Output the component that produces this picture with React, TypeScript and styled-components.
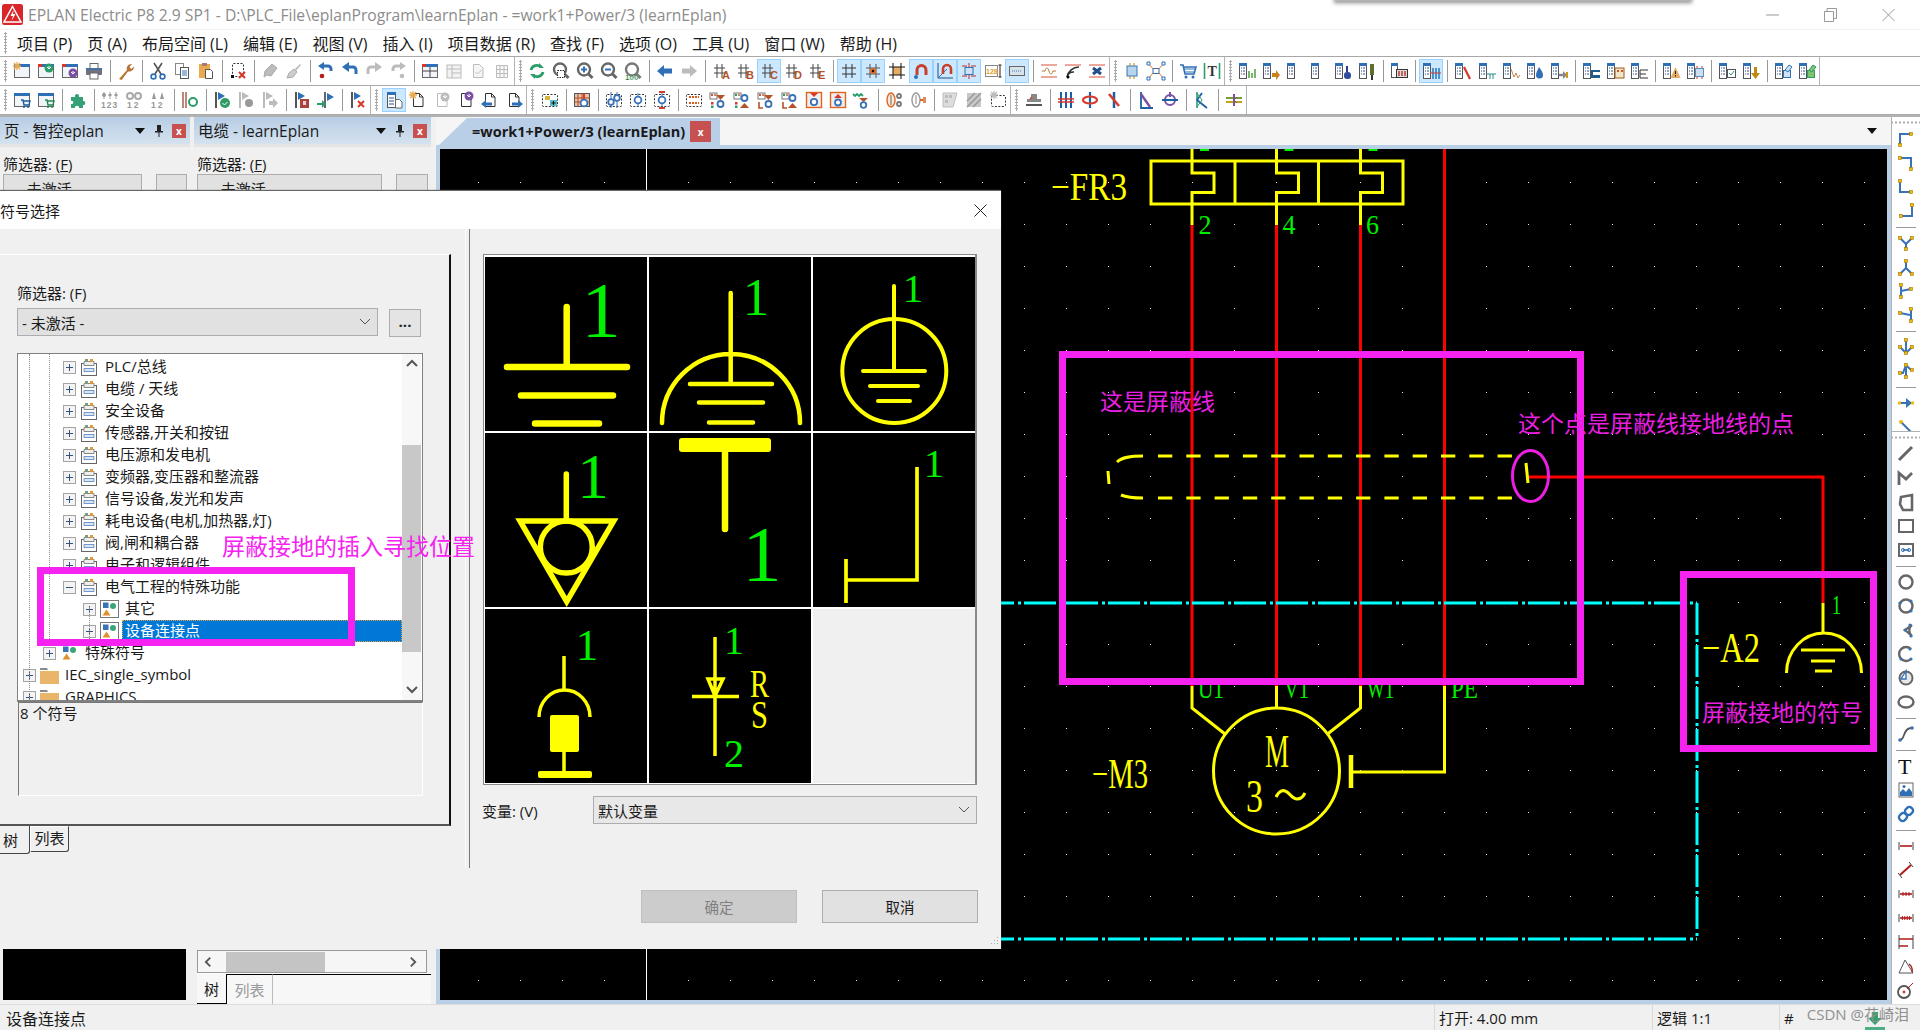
import React from 'react'
import styled, { createGlobalStyle } from 'styled-components'

const BLUE = '#2f6fb5'
const RED = '#d8392b'
const GREEN = '#2a9d6a'
const ORANGE = '#e9a94f'
const GRAY = '#666'
const LIGHT = '#bcbcbc'
const RUST = '#b5522a'
const PURPLE = '#7b4fa3'
const MAGENTA = '#f622f0'
const YELLOW = '#ffff00'
const LIME = '#00f000'
const UI_FONT = '"Open Sans", "Noto Sans CJK SC", sans-serif'

const burst = (x: number, y: number, c = ORANGE) => (
  <path d={`M${x - 4} ${y}h8M${x} ${y - 4}v8M${x - 3} ${y - 3}l6 6M${x + 3} ${y - 3}l-6 6`} stroke={c} strokeWidth="1.3" />
)
const win = (corner?: string, head = BLUE) => (
  <>
    <rect x="2.5" y="4.5" width="15" height="12" fill="#f1f5fa" stroke={GRAY} />
    <rect x="2" y="3" width="16" height="3" fill={head} />
    {corner && <rect x="2" y="3" width="4" height="3" fill={corner} />}
  </>
)
const badge = (c: string, x = 13, y = 7) => (
  <>
    <circle cx={x} cy={y} r="4.5" fill={c} />
    <path d={`M${x - 2} ${y - 1}l2 2l2 -2M${x} ${y + 1}v-3`} stroke="#fff" fill="none" />
  </>
)
const page = (c = GRAY) => <path d="M5.5 3.5h6l3.5 3.5v9.5h-9.5zM11.5 3.5v3.5h3.5" fill="#fff" stroke={c} />
const hash = (c = '#444') => <path d="M6 3v14M11 3v14M3 7h11M3 12h11" stroke={c} fill="none" />
const letter = (t: string) => (
  <text x="11" y="18" fontSize="11" fontWeight="700" fill={RUST} fontFamily="Liberation Sans">{t}</text>
)
const lens = (inner: React.ReactNode, c = '#666') => (
  <>
    <circle cx="9" cy="8.5" r="6" fill="none" stroke={c} strokeWidth="2.4" />
    <path d="M13.5 13l4 4" stroke={c} strokeWidth="3" />
    {inner}
  </>
)
const listDoc = (over: React.ReactNode) => (
  <>
    <rect x="2.5" y="3.5" width="7" height="14" fill="#fff" stroke="#555" />
    <rect x="2" y="2" width="8" height="3" fill={BLUE} />
    <path d="M4 7h1M4 10h1M4 13h1M6 7h2M6 10h2M6 13h2" stroke="#2c4f8f" />
    {over}
  </>
)
const flag = (over?: React.ReactNode, c = BLUE, bar = '#555') => (
  <>
    <path d="M4 2v16" stroke={bar} strokeWidth="2" />
    <path d="M6 2l7 4l-7 4z" fill={c} />
    {over}
  </>
)
const xMark = (x: number, y: number) => <path d={`M${x - 3} ${y - 3}l6 6M${x + 3} ${y - 3}l-6 6`} stroke={RED} strokeWidth="2" />
const ring = (x: number, y: number, r = 2.8, c = '#3a72b8') => <circle cx={x} cy={y} r={r} fill="#fff" stroke={c} strokeWidth="1.8" />
const dashed = (x = 2.5, y = 4.5, w = 15, h = 12) => (
  <rect x={x} y={y} width={w} height={h} rx="1" fill="none" stroke="#333" strokeDasharray="2 1.5" />
)
const redTri = (y = 5, c = RUST) => <path d={`M8 ${y}h9l-4.5 5z`} fill={c} />
const thumb = (c: string) => (
  <>
    <rect x="2" y="3" width="7" height="6" fill="#fff" stroke="#777" />
    <rect x="3" y="4" width="2" height="2" fill={c} />
    <rect x="6" y="4" width="2" height="2" fill="#c85" />
  </>
)
const hook = (d: string, pts: number[][]) => (
  <>
    <path d={d} fill="none" stroke="#3a72b8" strokeWidth="2" />
    {pts.map(([x, y], i) => <rect key={i} x={x - 1.5} y={y - 1.5} width="3" height="3" fill="#f0b90b" stroke="#a57800" strokeWidth=".6" />)}
  </>
)
const measure = (ticks: number) => (
  <>
    <path d="M3 6v8M17 6v8" stroke="#444" />
    <path d="M4 10h12" stroke="#b01b1b" strokeWidth="1.6" />
    {Array.from({ length: ticks }).map((_, i) => <path key={i} d={`M${4 + (i + 1) * 12 / (ticks + 1)} 8v4`} stroke="#b01b1b" />)}
  </>
)

const icons: Record<string, React.ReactNode> = {
  newPage: <>{win()}{burst(5, 5)}</>,
  openPage: <>{win(RED)}{badge(GREEN)}</>,
  closePage: <>{win(RED)}{badge(PURPLE, 13, 12)}</>,
  print: <><rect x="6" y="2.5" width="8" height="5" fill="#fff" stroke={GRAY} /><rect x="2" y="7" width="16" height="7" rx="1" fill="#6d7480" /><rect x="2" y="7" width="16" height="2" fill="#4b6f9e" /><rect x="6" y="12" width="8" height="6" fill="#fff" stroke={GRAY} /></>,
  wrench: <path d="M3 18l8-9c-1-3 1-6 5-6l-2.5 3l1.5 2l3-2.5c0 3.5-3 5.5-6 5l-6.5 8.5z" fill="#b87333" />,
  cut: <><path d="M6 2l7 11M14 2l-7 11" stroke="#555" strokeWidth="1.6" /><circle cx="5.5" cy="15.5" r="2.4" fill="none" stroke={BLUE} strokeWidth="1.6" /><circle cx="14.5" cy="15.5" r="2.4" fill="none" stroke={BLUE} strokeWidth="1.6" /></>,
  copy: <><rect x="3.5" y="2.5" width="8" height="11" fill="#fff" stroke="#888" /><rect x="8.5" y="6.5" width="8" height="11" fill="#fff" stroke="#555" /><path d="M10 10h5M10 12h5M10 14h5" stroke={BLUE} /></>,
  paste: <><rect x="3" y="3" width="11" height="14" fill={ORANGE} /><rect x="6" y="2" width="5" height="3" fill="#a77" /><path d="M9.5 8.5h5l2 2v7h-7z" fill="#fff" stroke="#555" /></>,
  selectx: <>{dashed(4.5, 2.5, 11, 13)}<rect x="3" y="14" width="3" height="3" fill="#111" />{xMark(14, 14)}</>,
  brushA: <path d="M5 10l7-7l5 4l-6 8l-4-1l-3 2z" fill={LIGHT} stroke="#aaa" />,
  brushB: <><path d="M11 8l5-5l1 1l-5 6z" fill={LIGHT} /><path d="M5 12l5-4l3 3l-4 5l-6 1z" fill="#ccc" stroke="#aaa" /></>,
  undoDot: <><path d="M15 10v-2a3 3 0 0 0-3-3h-5" fill="none" stroke={BLUE} strokeWidth="3" /><path d="M8 1l-6 4l6 4z" fill={BLUE} /><circle cx="6" cy="15" r="2.3" fill="#b71c1c" /></>,
  undo: <><path d="M16 13v-4a3 3 0 0 0-3-3h-5" fill="none" stroke={BLUE} strokeWidth="3" /><path d="M9 1l-7 5l7 5z" fill={BLUE} /></>,
  redo: <><path d="M4 13v-4a3 3 0 0 1 3-3h5" fill="none" stroke={LIGHT} strokeWidth="3" /><path d="M11 1l7 5l-7 5z" fill={LIGHT} /></>,
  redoDot: <><path d="M5 10v-2a3 3 0 0 1 3-3h5" fill="none" stroke={LIGHT} strokeWidth="3" /><path d="M12 1l6 4l-6 4z" fill={LIGHT} /><circle cx="14" cy="15" r="2.3" fill={LIGHT} /></>,
  layout: <>{win(RED)}<path d="M3 10h14M10 6v10" stroke="#444" /></>,
  layoutGray: <><rect x="3" y="4" width="14" height="13" fill="#f2f2f2" stroke={LIGHT} /><path d="M3 8h14M8 4v13M8 12h9" stroke={LIGHT} /></>,
  checkGray: <><path d="M5.5 3.5h6l3.5 3.5v9.5h-9.5z" fill="#f5f5f5" stroke={LIGHT} /><path d="M7.5 11l2 2l4-4" stroke={LIGHT} fill="none" /></>,
  tableGray: <path d="M4.5 4.5h11v12h-11zM4.5 8.5h11M4.5 12.5h11M8 4.5v12M12 4.5v12" stroke={LIGHT} fill="#f8f8f8" />,
  refresh: <><path d="M4 9a6 6 0 0 1 10-3" fill="none" stroke={GREEN} strokeWidth="2.8" /><path d="M16 11a6 6 0 0 1-10 3" fill="none" stroke={GREEN} strokeWidth="2.8" /><path d="M12 2l5 5h-5zM8 18l-5-5h5z" fill={GREEN} /></>,
  zoomWin: lens(<rect x="6.5" y="9.5" width="7" height="7" fill="#fff" stroke="#222" strokeDasharray="1.5 1" />),
  zoomIn: lens(<path d="M6 8.5h6M9 5.5v6" stroke={BLUE} strokeWidth="2" />),
  zoomOut: lens(<path d="M6 8.5h6" stroke={BLUE} strokeWidth="2" />),
  zoom100: lens(<text x="2" y="19" fontSize="8" fontWeight="700" fill="#1f7a43" stroke="#fff" strokeWidth=".2" fontFamily="Liberation Sans">100</text>, '#777'),
  back: <path d="M2 10l7-6v3.5h8v5h-8v3.5z" fill={BLUE} />,
  forward: <path d="M18 10l-7-6v3.5h-8v5h8v3.5z" fill={LIGHT} />,
  hashA: <>{hash()}{letter('A')}</>,
  hashB: <>{hash()}{letter('B')}</>,
  hashC: <>{hash()}{letter('C')}</>,
  hashD: <>{hash()}{letter('D')}</>,
  hashE: <>{hash()}{letter('E')}</>,
  grid: <path d="M7 3v14M13 3v14M3 7h14M3 13h14" stroke="#333" />,
  gridDot: <><path d="M7 3v14M13 3v14M3 7h14M3 13h14" stroke="#555" /><circle cx="10" cy="10" r="3" fill="#e26a1b" /><circle cx="10" cy="10" r="1.2" fill="#111" /></>,
  snap: <><rect x="6" y="6" width="8" height="8" fill="#e5ac62" /><path d="M6 2v16M14 2v16M2 6h16M2 14h16" stroke="#111" /></>,
  magnet: <><path d="M6 14v-5a4.5 4.5 0 0 1 9 0v5" fill="none" stroke="#c6402a" strokeWidth="3" /><circle cx="5" cy="16" r="2" fill={BLUE} /></>,
  magnetAxis: <><path d="M3 2v15h15" stroke="#1d4f8a" fill="none" /><path d="M3 17l9-9" stroke={BLUE} /><path d="M8 13v-5a4 4 0 0 1 8 0v5" fill="none" stroke="#c6402a" strokeWidth="2.6" /></>,
  snapPart: <><rect x="6" y="6.5" width="8" height="7" fill="#cfe3f7" stroke={BLUE} /><path d="M10 2v4M10 14v4M3 5h5M12 5h5M3 15h5M12 15h5" stroke="#c02a2a" /></>,
  num128: <><rect x="2.5" y="4.5" width="12" height="11" fill="#fff" stroke="#888" /><text x="3" y="13" fontSize="7" fontWeight="700" fill="#e3a21a" fontFamily="Liberation Sans">128</text><path d="M17 4v12M15.5 4h3M15.5 16h3" stroke="#222" /></>,
  rectDots: <><rect x="2.5" y="5.5" width="15" height="9" fill="#d8e2ea" stroke="#666" /><path d="M5 10h10" stroke="#3a72b8" strokeDasharray="1 1" /></>,
  lineWave: <><path d="M2 4h16M2 16h16" stroke="#d8503a" /><path d="M3 10h3c1-4 3-4 4 0s3 4 4 0h3" fill="none" stroke="#b87333" /></>,
  lineSignal: <><path d="M2 4h16" stroke="#d8503a" /><path d="M4 16a12 12 0 0 1 12-10M4 16a7 7 0 0 1 7-5" fill="none" stroke="#333" strokeWidth="1.6" /><circle cx="5" cy="16" r="1.5" /></>,
  lineCross: <><path d="M2 4h16M2 16h16" stroke="#d8503a" /><path d="M6 7l8 6M14 7l-8 6" stroke="#224f88" strokeWidth="3" /></>,
  chip: <><rect x="5" y="5" width="10" height="10" fill="#b9d5ee" stroke="#3a72b8" /><path d="M8 2v3M12 2v3M8 15v3M12 15v3" stroke="#b8860b" /></>,
  chipLinks: <><rect x="7" y="7.5" width="6" height="5" fill="#fff" stroke={BLUE} /><path d="M3 3l4 5M17 3l-4 5M3 17l4-5M17 17l-4-5" stroke="#e27b2e" /><path d="M1 1h3v3h-3zM16 1h3v3h-3zM1 16h3v3h-3zM16 16h3v3h-3z" fill="#fff" stroke={BLUE} /></>,
  cart: <><path d="M2 4h3l2 9h9l2-7H6" fill="none" stroke={BLUE} strokeWidth="1.6" /><path d="M6 8h11M7 11h10" stroke={BLUE} /><circle cx="8" cy="16" r="1.5" fill={BLUE} /><circle cx="15" cy="16" r="1.5" fill={BLUE} /></>,
  textT: <><path d="M2.5 2v16" stroke={GREEN} strokeWidth="1.6" /><path d="M17.5 2v16" stroke={GREEN} strokeWidth="1.6" /><text x="5.5" y="15" fontSize="14" fontWeight="700" fill="#333" fontFamily="Liberation Serif">T</text></>,
  listGreen: listDoc(<><rect x="11" y="10" width="2" height="7" fill="#79b86c" /><rect x="14" y="12" width="2" height="5" fill="#79b86c" /><rect x="17" y="8" width="2" height="9" fill="#79b86c" /></>),
  listOut: listDoc(<path d="M11 12h4v-3l4 5l-4 5v-3h-4z" fill="#c9831e" />),
  listPlain: listDoc(null),
  listBlob: listDoc(<><path d="M14 5v6" stroke="#223e8c" strokeWidth="2" /><rect x="11" y="11" width="7" height="7" rx="3" fill="#2f4c9c" /></>),
  listSword: listDoc(<><rect x="13" y="3" width="4" height="11" fill="#5f6f2f" /><path d="M15 14v5" stroke="#333" strokeWidth="2" /></>),
  listDark: <><rect x="2.5" y="3.5" width="6" height="13" fill="#fff" stroke="#555" /><rect x="2" y="2" width="7" height="3" fill={BLUE} /><rect x="7.5" y="8.5" width="11" height="8" fill="#ddd" stroke="#333" /><path d="M10 10v5M13 10v5M16 10v5" stroke="#b5322a" strokeWidth="1.4" /></>,
  listRail: listDoc(<><path d="M12 7v11M15 7v11M18 7v11" stroke="#1c78c0" strokeWidth="1.5" /><path d="M9 12h11" stroke={RED} /></>),
  listCut: listDoc(<path d="M11 6l6 12" stroke={RED} strokeWidth="2.2" />),
  listWires: listDoc(<path d="M10 13h9M13 13v5M16 13v5" stroke="#2a8a8a" fill="none" />),
  listWave: listDoc(<path d="M10 8l3 8l2-4l2 5l2-3" stroke="#c6865a" fill="none" />),
  listDrop: listDoc(<path d="M14 6c3 4 4 6 4 8a3.5 3.5 0 0 1-7 0c0-2 1-4 3-8z" fill={BLUE} />),
  listArrow: listDoc(<><path d="M10 14h7" stroke="#888" strokeWidth="2.5" /><path d="M14 10l4 4l-4 4z" fill="#888" /><rect x="17" y="11" width="2" height="6" fill="#cc9a1b" /></>),
  listBlueT: listDoc(<path d="M10 9h9v2h-7v3h7v3h-9z" fill="#205d8c" />),
  listPlan: listDoc(<><rect x="10" y="7" width="9" height="10" fill="#f0e7c6" stroke="#a05a1b" /><path d="M12 9h2v2h-2zM16 9h2v2h-2z" fill="#d8502a" /></>),
  listBlackT: listDoc(<path d="M11 9h8M11 9v8M11 13h6M11 17h8" stroke="#333" fill="none" />),
  listWarn: listDoc(<><path d="M14.5 6l5 11h-10z" fill="#e5ac62" /><path d="M14.5 10v3M14.5 14v1.5" stroke="#222" /></>),
  listChip: listDoc(<><rect x="10.5" y="7.5" width="8" height="8" fill="#cde0f2" stroke="#5b8dc0" /><path d="M12 5v2M17 5v2M12 16v2M17 16v2" stroke={RED} /></>),
  listCheck: listDoc(<><rect x="10.5" y="8.5" width="8" height="8" fill="#fff" stroke="#555" /><path d="M12 12l2 2l3-4" stroke={GREEN} fill="none" /></>),
  listDown: listDoc(<path d="M13 6h3v6h3l-4.5 6l-4.5-6h3z" fill="#c08a12" />),
  listEdit: listDoc(<><rect x="10.5" y="9.5" width="7" height="7" fill="#cfe3f7" stroke={BLUE} /><path d="M12 9l4-5l3 2l-4 5z" fill="#cfe3f7" stroke={BLUE} /></>),
  listEditG: listDoc(<><rect x="10.5" y="9.5" width="7" height="7" fill="#7ec46a" stroke={GREEN} /><path d="M12 9l4-5l3 2l-4 5z" fill="#7ec46a" stroke={GREEN} /></>),
  cartBlue: <>{win()}<path d="M9 10h2l1 5h5l1-4h-7" fill="none" stroke="#1c5a9c" strokeWidth="1.4" /><circle cx="12" cy="17" r="1" fill="#1c5a9c" /><circle cx="16" cy="17" r="1" fill="#1c5a9c" /></>,
  cartGreen: <>{win()}<path d="M9 10h2l1 5h5l1-4h-7" fill="none" stroke="#1f8a4c" strokeWidth="1.4" /><circle cx="12" cy="17" r="1" fill="#1f8a4c" /><circle cx="16" cy="17" r="1" fill="#1f8a4c" /></>,
  puzzle: <path d="M3 7h4c-1-4 5-4 4 0h4v4c3-1 3 5 0 4v3h-4c1-3-5-3-4 0h-4v-4c3 1 3-4 0-3z" fill="#36a177" />,
  term123: <><path d="M4 2v7M10 2v7M16 2v7" stroke="#999" /><circle cx="4" cy="5" r="2" fill="#999" /><rect x="8.5" y="4" width="3" height="2" fill="#999" /><rect x="14.5" y="4" width="3" height="2" fill="#999" /><text x="1" y="18" fontSize="8.5" fontWeight="700" fill="#999" fontFamily="Liberation Sans" letterSpacing="1">123</text></>,
  term12a: <><circle cx="6" cy="6" r="3" fill="none" stroke="#aaa" strokeWidth="2" /><circle cx="14" cy="6" r="3" fill="none" stroke="#aaa" strokeWidth="2" /><text x="3" y="18" fontSize="8.5" fontWeight="700" fill="#999" fontFamily="Liberation Sans" letterSpacing="2">12</text></>,
  term12b: <><path d="M6 2l2 7h-4zM14 2l2 7h-4z" fill="#999" /><text x="3" y="18" fontSize="8.5" fontWeight="700" fill="#999" fontFamily="Liberation Sans" letterSpacing="2">12</text></>,
  barsRefresh: <><path d="M3 2v16M6 2v16" stroke="#b0685a" strokeWidth="1.6" /><circle cx="13" cy="12" r="4" fill="none" stroke={GREEN} strokeWidth="2" /></>,
  flagCheck: flag(<><circle cx="13" cy="13" r="5" fill="#2f9a66" /><path d="M10.5 13l2 2l3-3" stroke="#fff" fill="none" /></>),
  flagGear: flag(<circle cx="13" cy="13" r="4" fill="#999" />, LIGHT, LIGHT),
  flagArrow: flag(<path d="M9 11h4v-3l5 5l-5 5v-3h-4z" fill={LIGHT} />, LIGHT, LIGHT),
  flagBook: flag(<><rect x="8" y="9" width="9" height="9" fill="#a8453a" /><rect x="11" y="11" width="3" height="4" fill="#ecd" /></>),
  flagIn: <><path d="M9 2v16" stroke={GRAY} strokeWidth="2" /><path d="M11 3l7 4l-7 4z" fill={BLUE} /><path d="M1 13h5v-3l4 4l-4 4v-3h-5z" fill={GREEN} /></>,
  flagX: flag(xMark(13, 14)),
  docActive: <><rect x="3.5" y="2.5" width="8" height="15" fill="#fff" stroke="#555" /><rect x="3" y="2" width="9" height="3" fill={BLUE} /><path d="M5 8h5M5 11h5M5 14h5" stroke="#2c4f8f" /><path d="M11.5 9.5h4l2.5 2.5v6h-6.5z" fill="#fff" stroke={GRAY} /></>,
  pageNew: <>{page('#333')}{burst(5, 5)}</>,
  pageOpen: <>{page(LIGHT)}{badge(LIGHT)}</>,
  pageClose: <>{page('#333')}{badge(PURPLE, 13, 6)}</>,
  pageIn: <>{page('#333')}<path d="M1 14l5-4v2.5h6v3h-6v2.5z" fill={BLUE} /></>,
  pageOut: <>{page('#333')}<path d="M19 14l-5-4v2.5h-6v3h6v2.5z" fill={BLUE} /></>,
  dashAdd: <>{dashed()}<path d="M5 7h5M5 9h5" stroke="#c79b00" strokeWidth="1.4" /><rect x="10" y="10" width="7" height="6" fill="#55bcc9" /><path d="M13.5 11v4M11.5 13h4" stroke="#111" /></>,
  gridNode: <><rect x="2.5" y="3.5" width="15" height="13" fill="#e7c3a5" stroke="#555" /><path d="M6 4v12M10 4v12M2 8h15M2 12h15" stroke="#b5482b" />{ring(12, 13, 3.4)}<path d="M12 3v6" stroke={RED} strokeWidth="2" /></>,
  dashRings: <>{dashed()}<path d="M7 2v16M13 2v16" stroke="#3a72b8" />{ring(7, 12)}{ring(13, 8)}</>,
  dashRing: <>{dashed()}<path d="M10 3v14" stroke="#3a72b8" />{ring(10, 10, 3.4)}</>,
  dashRingRed: <>{dashed()}<path d="M10 2v16" stroke="#3a72b8" /><path d="M7 2h6M7 18h6" stroke={RED} strokeWidth="2" />{ring(10, 10, 3.4)}</>,
  dashBanks: <>{dashed()}<path d="M5 7h10M5 13h10" stroke="#d85a1b" strokeDasharray="2 1" strokeWidth="2" /></>,
  termA: <>{thumb('#c55')}{redTri()}{ring(12.5, 14, 3)}<rect x="3" y="12" width="2.5" height="2.5" fill={RED} /><rect x="3" y="15.5" width="2.5" height="2.5" fill={GREEN} /></>,
  termB: <>{thumb(GREEN)}{ring(12.5, 8, 3)}<path d="M8 18h9l-4.5-5z" fill={RUST} /><rect x="3" y="12" width="2.5" height="2.5" fill={RED} /><rect x="3" y="15.5" width="2.5" height="2.5" fill={GREEN} /></>,
  termC: <>{thumb('#c55')}{redTri()}{ring(12.5, 14, 3)}<path d="M3 12v6h4" stroke={RUST} fill="none" strokeWidth="1.6" /></>,
  termD: <>{thumb(GREEN)}{ring(12.5, 8, 3)}<path d="M8 18h9l-4.5-5z" fill={RUST} /><path d="M3 12v6h4" stroke={RUST} fill="none" strokeWidth="1.6" /></>,
  boxDown: <><rect x="2.5" y="2.5" width="15" height="15" fill="#eee" stroke="#e0641b" strokeWidth="1.4" /><path d="M6 3h8l-4 4z" fill={RED} />{ring(10, 12, 3.2)}</>,
  boxUp: <><rect x="2.5" y="2.5" width="15" height="15" fill="#eee" stroke="#e0641b" strokeWidth="1.4" /><path d="M6 8h8l-4-4z" fill={RED} />{ring(10, 12.5, 3)}</>,
  greenTerm: <><path d="M1 4l2 2l2-2l2 2l2-2l2 2" stroke={GREEN} fill="none" strokeWidth="1.8" /><path d="M7 8h9l-4.5 4z" fill={RUST} />{ring(11.5, 15, 2.8)}</>,
  lampLink: <><ellipse cx="7" cy="10" rx="4" ry="7" fill="#fbe9dc" stroke="#e0641b" strokeWidth="1.4" /><path d="M7 5v10" stroke="#666" />{ring(15, 6, 2, '#777')}{ring(15, 14, 2, '#777')}</>,
  lampRed: <><ellipse cx="8" cy="10" rx="4" ry="7" fill="#fff" stroke="#999" strokeWidth="1.4" /><path d="M8 5v9" stroke="#888" /><path d="M12 10h3" stroke="#e0641b" strokeWidth="2" /><rect x="15" y="7" width="3" height="6" fill="#e08a60" /></>,
  pageCorner: <><path d="M3 3h14l-4 14h-10z" fill="#ddd" stroke={LIGHT} /><path d="M5 5h3v3h-3zM9 5h3v3h-3zM5 10h3v3h-3z" fill={LIGHT} /></>,
  hatched: <><rect x="3" y="3" width="14" height="14" fill="#c8c8c8" /><path d="M3 11l8-8M3 17l14-14M9 17l8-8" stroke="#999" strokeWidth="1.5" /></>,
  dashBurst: <>{dashed(3.5, 5.5, 14, 11)}{burst(6, 5, LIGHT)}</>,
  stamp: <><rect x="7" y="4" width="6" height="5" fill="#888" /><rect x="3" y="9" width="14" height="3" fill="#888" /><path d="M2 15h16" stroke="#555" strokeWidth="2" /><path d="M6 9l2-2" stroke={RED} strokeWidth="1.4" /></>,
  triBars: <><path d="M5 2v16M10 2v16M15 2v16" stroke="#1c5fa5" strokeWidth="2" /><path d="M2 9h16M2 12h16" stroke={RED} strokeWidth="1.5" /></>,
  lineRing: <><path d="M10 2v16" stroke="#1c5fa5" strokeWidth="2.2" /><ellipse cx="10" cy="10" rx="7" ry="3.5" fill="none" stroke={RED} strokeWidth="2.2" /></>,
  lineCut: <><path d="M10 2v16" stroke="#1c5fa5" strokeWidth="2.5" /><path d="M5 4l10 12" stroke={RED} strokeWidth="2.5" /></>,
  kBlue: <><path d="M5 2v16h12" stroke="#1c5fa5" fill="none" strokeWidth="1.8" /><path d="M5 4l9 13" stroke={PURPLE} strokeWidth="2.4" /></>,
  ringBar: <><circle cx="10" cy="10" r="5" fill="none" stroke={PURPLE} strokeWidth="2" /><path d="M2 10h16" stroke="#1c5fa5" strokeWidth="2" /><path d="M10 2v5" stroke={PURPLE} strokeWidth="2" /></>,
  kGreen: <><path d="M5 2v16" stroke={GREEN} strokeWidth="1.6" /><path d="M5 10l5-7M5 10l10 8" stroke="#1c5fa5" strokeWidth="1.8" /><path d="M5 3l5 7l-5 7" fill="none" stroke={GREEN} /></>,
  rainbow: <><path d="M2 8h16" stroke="#7b9b3a" strokeWidth="2" /><path d="M2 12h16" stroke="#c8a21b" strokeWidth="2" /><path d="M10 4v12" stroke={PURPLE} strokeWidth="2" /><path d="M13 7l-3 3l3 3" stroke="#666" fill="none" /></>,
  hookA: hook('M4 16V5h11', [[4, 16], [15, 5]]),
  hookB: hook('M4 5h11v11', [[4, 5], [15, 16]]),
  hookC: hook('M4 4v11h11', [[4, 4], [15, 15]]),
  hookD: hook('M16 4v11H5', [[16, 4], [5, 15]]),
  forkA: hook('M10 16V11l6-6M10 11L4 5', [[4, 5], [16, 5], [10, 16]]),
  forkB: hook('M10 4v7l6 6M10 11L4 17', [[10, 4], [4, 17], [16, 17]]),
  forkC: hook('M5 4v12M5 10l10-2', [[5, 4], [5, 16], [15, 8]]),
  forkD: hook('M4 8l10 2M15 4v6l0 6', [[15, 4], [4, 8], [15, 16]]),
  tripleA: hook('M10 3v14M4 10l6 6l6-6', [[10, 3], [4, 10], [16, 10], [10, 16]]),
  tripleB: hook('M4 12h3l3-8l5 5M10 4v13', [[10, 4], [4, 12], [16, 9], [10, 16]]),
  pointer: <><path d="M3 10h10" stroke="#3a72b8" strokeWidth="2" /><path d="M10 5l6 5l-6 5z" fill="#3a72b8" /><rect x="2" y="8.5" width="3" height="3" fill="#f0b90b" /><rect x="15" y="8.5" width="3" height="3" fill="#f0b90b" /></>,
  diag: <><circle cx="5" cy="5" r="2" fill="#f0b90b" /><path d="M6 6l10 10" stroke="#3a72b8" strokeWidth="2" /></>,
  line: <path d="M3 16l13-13" stroke="#666" strokeWidth="3" />,
  polyline: <path d="M3 17V5l7 6l6-6" stroke="#666" strokeWidth="2.8" fill="none" />,
  polygon: <path d="M5 5l11-2v15H7l-3-6z" stroke="#666" strokeWidth="2.6" fill="none" />,
  square: <rect x="3" y="4" width="14" height="12" fill="none" stroke="#666" strokeWidth="2" />,
  squareLink: <><rect x="3" y="4" width="14" height="12" fill="none" stroke="#666" strokeWidth="2" /><path d="M7 10h6" stroke={BLUE} strokeWidth="1.6" /><circle cx="7" cy="10" r="1.5" fill="none" stroke={BLUE} /><circle cx="13" cy="10" r="1.5" fill="none" stroke={BLUE} /></>,
  circle: <circle cx="10" cy="10" r="6.5" fill="none" stroke="#666" strokeWidth="2.4" />,
  circlePts: <><circle cx="10" cy="10" r="6.5" fill="none" stroke="#666" strokeWidth="2.4" /><circle cx="4" cy="7" r="1.6" fill="#3a72b8" /><circle cx="15" cy="5" r="1.6" fill="#3a72b8" /><circle cx="15" cy="15" r="1.6" fill="#3a72b8" /></>,
  arcPts: <><path d="M16 5a7 7 0 0 0 0 11L9 10z" fill="none" stroke="#666" strokeWidth="2.2" /><circle cx="14" cy="5" r="1.6" fill="#3a72b8" /><circle cx="9" cy="10" r="1.6" fill="#3a72b8" /><circle cx="15" cy="16" r="1.6" fill="#3a72b8" /></>,
  arc: <><path d="M15 5a7 7 0 1 0 0 10" fill="none" stroke="#666" strokeWidth="2.4" /><circle cx="14" cy="5" r="1.6" fill="#3a72b8" /><circle cx="5" cy="15" r="1.6" fill="#3a72b8" /><circle cx="15" cy="15" r="1.6" fill="#3a72b8" /></>,
  sector: <><circle cx="10" cy="10" r="6.5" fill="#e8e8e8" stroke="#666" strokeWidth="2" /><path d="M10 3L5 11h5z" fill="#fff" stroke="#3a72b8" strokeWidth="1.4" /></>,
  ellipse: <ellipse cx="10" cy="10" rx="7.5" ry="5.5" fill="none" stroke="#666" strokeWidth="2.4" />,
  spline: <><path d="M4 16c5 0 3-12 11-12" fill="none" stroke="#555" strokeWidth="1.8" /><circle cx="4" cy="16" r="1.8" fill="#3a72b8" /><circle cx="16" cy="4" r="1.8" fill="#3a72b8" /></>,
  bigT: <text x="2" y="18" fontSize="22" fontFamily="Liberation Serif" fill="#111">T</text>,
  picture: <><rect x="3" y="3" width="14" height="14" fill="#fff" stroke="#666" /><path d="M4 16V12l3-3l3 3l3-4l3 4v4z" fill="#2f6fb5" /><circle cx="8" cy="6.5" r="1.5" fill="#2f6fb5" /></>,
  chain: <><rect x="3" y="9.5" width="8" height="7" rx="3" transform="rotate(-45 7 13)" fill="none" stroke="#2f6fb5" strokeWidth="2.4" /><rect x="9" y="3.5" width="8" height="7" rx="3" transform="rotate(-45 13 7)" fill="none" stroke="#2f6fb5" strokeWidth="2.4" /></>,
  measure1: measure(0),
  measureDiag: <><path d="M4 15l11-10" stroke="#b01b1b" strokeWidth="2" /><path d="M2 13l4 5M13 2l4 5" stroke="#444" /></>,
  measure3: measure(3),
  measure4: measure(4),
  measureStack: <><path d="M3 3v14M17 3v14" stroke="#444" /><path d="M3 7h14M3 14h9" stroke="#b01b1b" strokeWidth="1.6" /></>,
  angle: <><path d="M3 17h14L9 4z" fill="none" stroke="#555" /><path d="M13 8a8 8 0 0 1 3 8" fill="none" stroke="#b01b1b" strokeWidth="1.4" /></>,
  radius: <><circle cx="8" cy="12" r="6" fill="none" stroke="#555" strokeWidth="1.8" /><circle cx="8" cy="12" r="1.4" fill={RED} /><path d="M11 9l6-6" stroke="#b01b1b" /></>,
}

const GlobalStyle = createGlobalStyle`
  html, body {
    margin: 0;
    width: 1920px;
    height: 1030px;
    overflow: hidden;
    background: #f0f0f0;
  }
  * {
    box-sizing: border-box;
  }
  svg {
    display: block;
  }
`

const Window = styled.div`
  position: relative;
  display: flex;
  flex-direction: column;
  width: 1920px;
  height: 1030px;
  overflow: hidden;
  font-family: ${UI_FONT};
  font-size: 15px;
  color: #1a1a1a;
  background: #f0f0f0;
`

const TitleBar = styled.div`
  display: flex;
  align-items: center;
  height: 29px;
  padding-left: 2px;
  background: #fff;
  flex-shrink: 0;
`

const TitleText = styled.span`
  margin-left: 5px;
  font-size: 15.65px;
  color: #8c8c8c;
  white-space: nowrap;
`

const WindowControls = styled.div`
  display: flex;
  gap: 45px;
  margin-left: auto;
  padding-right: 25px;
`

const OtherWindowShadow = styled.div`
  position: absolute;
  top: -3px;
  left: 1335px;
  width: 356px;
  height: 4px;
  box-shadow: 0 1px 4px 1px #8d8d8d;
  background: #b5b5b5;
`

const MenuBar = styled.div`
  display: flex;
  align-items: center;
  height: 28px;
  background: #fff;
  border-top: 1px solid #f2f2f2;
  border-bottom: 1px solid #a8a8a8;
  font-size: 16px;
  flex-shrink: 0;
`

const MenuItem = styled.span`
  margin-right: 15px;
  white-space: nowrap;
`

const ToolRow = styled.div`
  display: flex;
  height: 29px;
  background: #fff;
  border-bottom: 1px solid #aaa;
  flex-shrink: 0;
`

const ToolGroup = styled.div`
  display: flex;
  align-items: center;
  border-right: 1px solid #b4b4b4;
`

const Grip = styled.span<{ $w: number; $mr?: number }>`
  width: ${(p) => p.$w}px;
  height: 22px;
  margin-right: ${(p) => p.$mr || 0}px;
  flex-shrink: 0;
  background: radial-gradient(circle, #aaa 1px, transparent 1.2px) 4px 0 / 3px 3px repeat-y;
`

const ToolButton = styled.span<{ $active?: boolean }>`
  display: flex;
  align-items: center;
  justify-content: center;
  width: 24px;
  height: 24px;
  flex-shrink: 0;
  background: ${(p) => (p.$active ? '#cce8ff' : 'transparent')};
  box-shadow: ${(p) => (p.$active ? 'inset 0 0 0 1px #99d1ff' : 'none')};
`

const ToolSep = styled.span`
  width: 8px;
  height: 22px;
  flex-shrink: 0;
  background: linear-gradient(#999, #999) center / 1px 100% no-repeat;
`

const Workspace = styled.div`
  display: flex;
  flex: 1;
  min-height: 0;
  border-top: 2px solid #b2b2b2;
`

const Dock = styled.div<{ $w: number; $mr: number }>`
  display: flex;
  flex-direction: column;
  width: ${(p) => p.$w}px;
  margin-right: ${(p) => p.$mr}px;
  flex-shrink: 0;
  overflow: hidden;
`

const DockHeader = styled.div`
  display: flex;
  align-items: center;
  height: 27px;
  padding: 0 4px;
  background: linear-gradient(#b7cde4, #d5e2ef);
  flex-shrink: 0;
`

const DockTitle = styled.span`
  flex: 1;
  font-size: 15.5px;
  white-space: nowrap;
`

const Caret = styled.span`
  width: 0;
  height: 0;
  margin-right: 8px;
  border-left: 5px solid transparent;
  border-right: 5px solid transparent;
  border-top: 6px solid #111;
`

const RedClose = styled.span<{ $size: number; $ml: number }>`
  display: flex;
  align-items: center;
  justify-content: center;
  width: ${(p) => p.$size}px;
  height: ${(p) => p.$size}px;
  margin-left: ${(p) => p.$ml}px;
  background: #c75050;
  color: #fff;
  font-size: 10px;
  font-weight: 700;
  line-height: 1;
`

const DockFilter = styled.div`
  height: 29px;
  padding: 6px 3px 0;
  border-top: 3px solid #e4e4e4;
  white-space: nowrap;
`

const DockSelectRow = styled.div`
  display: flex;
  justify-content: space-between;
  padding: 0 3px;
  margin-top: 1px;
`

const DockSelect = styled.div<{ $w: number }>`
  width: ${(p) => p.$w}px;
  height: 24px;
  padding: 3px 14px;
  background: #e1e1e1;
  border: 1px solid #adadad;
  white-space: nowrap;
`

const DockSpacer = styled.div`
  flex: 1;
`

const Preview = styled.div`
  height: 51px;
  margin: 0 4px 4px 3px;
  background: #000;
`

const HScroll = styled.div`
  display: flex;
  align-items: center;
  justify-content: space-between;
  height: 23px;
  margin: 0 4px 0 3px;
  padding: 0 6px;
  background: #f6f6f6;
  border: 1px solid #999;
`

const HThumb = styled.span`
  width: 111px;
  height: 20px;
  margin: 0 84px 0 11px;
  background: #c4c4c4;
`

const DockTabs = styled.div`
  display: flex;
  height: 31px;
  margin-left: 3px;
  background: #f7f7f7;
  border-top: 1px solid #fff;
`

const DockTab = styled.span<{ $on?: boolean }>`
  display: flex;
  align-items: center;
  justify-content: center;
  width: ${(p) => (p.$on ? '29px' : '47px')};
  color: ${(p) => (p.$on ? '#1a1a1a' : '#999')};
  border-bottom: ${(p) => (p.$on ? '1px solid #000' : 'none')};
  border-top: ${(p) => (p.$on ? 'none' : '1px solid #000')};
  border-left: ${(p) => (p.$on ? 'none' : '1px solid #000')};
  border-right: ${(p) => (p.$on ? 'none' : '1px solid #bbb')};
`

const DockTabRest = styled.span`
  flex: 1;
  border-top: 1px solid #000;
`

const DocArea = styled.div`
  display: flex;
  flex-direction: column;
  width: 1455px;
  flex-shrink: 0;
`

const TabStrip = styled.div`
  display: flex;
  align-items: flex-end;
  justify-content: space-between;
  height: 28px;
  padding: 0 6px 0 3px;
  background: #f5f5f5;
  flex-shrink: 0;
`

const DocTab = styled.div`
  display: flex;
  align-items: center;
  width: 281px;
  height: 27px;
  padding-left: 33px;
  background: #b9cfe8;
  clip-path: polygon(0 100%, 28px 0, 100% 0, 100% 100%);
  font-weight: 700;
  font-size: 14.5px;
  white-space: nowrap;
`

const StripCaret = styled(Caret)`
  margin-bottom: 11px;
`

const CanvasFrame = styled.div`
  flex: 1;
  padding: 4px;
  background: #b9cfe6;
`

const RightBar = styled.div`
  display: flex;
  flex-direction: column;
  width: 29px;
  flex-shrink: 0;
  background: #fff;
  border-left: 1px solid #b2b2b2;
`

const RightBlock = styled.div<{ $h: number }>`
  height: ${(p) => p.$h}px;
  overflow: hidden;
  border-bottom: 1px solid #b2b2b2;
  flex-shrink: 0;
`

const RightGrip = styled.div`
  height: 10px;
  background: radial-gradient(circle, #aaa 1px, transparent 1.2px) 2px 4px / 4px 3px repeat-x;
`

const RightTool = styled.div`
  display: flex;
  align-items: center;
  justify-content: center;
  height: 24px;
`

const RightSep = styled.div`
  height: 8px;
  background: linear-gradient(#999, #999) center / 20px 1px no-repeat;
`

const StatusBar = styled.div`
  display: flex;
  align-items: center;
  height: 26px;
  background: #f0f0f0;
  border-top: 1px solid #ddd;
  flex-shrink: 0;
`

const StatusCell = styled.div<{ $w?: number }>`
  display: flex;
  align-items: center;
  height: 100%;
  padding-left: ${(p) => (p.$w ? '4px' : '6px')};
  flex: ${(p) => (p.$w ? `0 0 ${p.$w}px` : '1')};
  border-left: ${(p) => (p.$w ? '1px solid #d8d8d8' : 'none')};
  font-size: ${(p) => (p.$w ? '15px' : '16px')};
  white-space: nowrap;
`

const Watermark = styled.span`
  position: absolute;
  right: 11px;
  bottom: 6px;
  font-size: 15px;
  color: #8f8f8f;
  white-space: nowrap;
`

const DownloadMark = styled.svg`
  position: absolute;
  right: 34px;
  bottom: 0;
`

const Dialog = styled.div`
  position: absolute;
  left: 0;
  top: 191px;
  display: flex;
  flex-direction: column;
  width: 1001px;
  height: 758px;
  background: #f0f0f0;
  box-shadow: 0 -1px 1px #666;
`

const DialogTitle = styled.div`
  display: flex;
  align-items: center;
  justify-content: space-between;
  height: 38px;
  padding-right: 14px;
  background: #fff;
  flex-shrink: 0;
`

const DialogBody = styled.div`
  display: flex;
  flex: 1;
  min-height: 0;
`

const LeftPane = styled.div`
  width: 465px;
  padding-top: 25px;
  flex-shrink: 0;
`

const TabPage = styled.div`
  width: 451px;
  height: 572px;
  padding: 27px 28px 0 17px;
  border-top: 1px solid #fff;
  border-right: 2px solid #111;
  border-bottom: 2px solid #555;
`

const FieldLabel = styled.div`
  height: 26px;
  line-height: 22px;
  white-space: nowrap;
`

const FilterRow = styled.div`
  display: flex;
  justify-content: space-between;
  height: 45px;
`

const ComboBox = styled.div<{ $w: number; $bg?: string }>`
  display: flex;
  align-items: center;
  justify-content: space-between;
  width: ${(p) => p.$w}px;
  height: 28px;
  padding: 0 6px 0 4px;
  background: ${(p) => p.$bg || '#e1e1e1'};
  border: 1px solid #adadad;
  white-space: nowrap;
`

const DotsButton = styled.button`
  width: 32px;
  height: 28px;
  margin-top: 1px;
  padding: 0 0 4px;
  background: #e4e4e4;
  border: 1px solid #adadad;
  font: 700 15px ${UI_FONT};
  color: #222;
`

const Tree = styled.div`
  position: relative;
  display: flex;
  width: 406px;
  height: 349px;
  background: #fff;
  border: 1px solid #808080;
  border-bottom-width: 2px;
`

const TreeGuide = styled.span<{ $x: number; $top: number; $h: number }>`
  position: absolute;
  left: ${(p) => p.$x}px;
  top: ${(p) => p.$top}px;
  height: ${(p) => p.$h}px;
  border-left: 1px dotted #8c8c8c;
`

const TreeRows = styled.div`
  position: relative;
  flex: 1;
  height: 346px;
  padding-top: 2px;
  overflow: hidden;
`

const TreeRow = styled.div<{ $x: number }>`
  display: flex;
  align-items: center;
  height: 22px;
  padding-left: ${(p) => p.$x}px;
`

const Expander = styled.svg`
  flex-shrink: 0;
  margin-right: 3px;
`

const RowLabel = styled.span<{ $selected?: boolean }>`
  display: block;
  flex: ${(p) => (p.$selected ? 1 : 'none')};
  height: 22px;
  margin-left: 3px;
  padding: 0 3px;
  line-height: 20px;
  white-space: nowrap;
  color: ${(p) => (p.$selected ? '#fff' : 'inherit')};
  background: ${(p) => (p.$selected ? '#0078d7' : 'transparent')};
  outline: ${(p) => (p.$selected ? '1px dotted #e6a23c' : 'none')};
  outline-offset: -1px;
`

const VScroll = styled.div`
  width: 19px;
  margin-right: 1px;
  background: #f7f7f7;
`

const ScrollArrow = styled.div`
  display: flex;
  justify-content: center;
  height: 18px;
  padding-top: 5px;
`

const VThumb = styled.div`
  height: 207px;
  margin-top: 73px;
  background: #c8c8c8;
`

const ScrollEnd = styled.div`
  display: flex;
  justify-content: center;
  height: 14px;
  margin-top: 33px;
`

const InfoBox = styled.div`
  width: 405px;
  height: 94px;
  margin: 0 0 0 1px;
  padding: 0 1px;
  border-top: 1px solid #777;
  border-left: 1px solid #777;
  border-right: 1px solid #fff;
  border-bottom: 1px solid #fff;
  line-height: 21px;
  white-space: nowrap;
`

const BookTabs = styled.div`
  display: flex;
  align-items: flex-start;
`

const BookTab = styled.span<{ $on?: boolean }>`
  display: flex;
  align-items: center;
  justify-content: center;
  height: ${(p) => (p.$on ? '28px' : '26px')};
  width: ${(p) => (p.$on ? '30px' : '39px')};
  padding: ${(p) => (p.$on ? '0 8px 0 0' : '0 0 4px')};
  border-bottom: 1px solid #444;
  border-right: 1px solid #444;
  border-left: ${(p) => (p.$on ? 'none' : '1px solid #fff')};
  border-top: ${(p) => (p.$on ? 'none' : '1px solid #fff')};
  border-radius: 0 0 3px 0;
`

const Splitter = styled.div`
  width: 5px;
  height: 639px;
  border-left: 1px solid #fbfbfb;
  border-right: 1.5px solid #777;
  flex-shrink: 0;
`

const RightPane = styled.div`
  display: flex;
  flex-direction: column;
  flex: 1;
  padding: 25px 0 0 13px;
`

const SymbolGrid = styled.div`
  display: grid;
  grid-template-columns: repeat(3, 162px);
  grid-template-rows: repeat(3, 174px);
  gap: 2px;
  width: 494px;
  height: 531px;
  padding: 2px 1px;
  background: #fff;
  border: 1px solid #8a8a8a;
  border-right-width: 2px;
  flex-shrink: 0;
`

const SymbolCell = styled.div<{ $empty?: boolean }>`
  background: ${(p) => (p.$empty ? '#f0f0f0' : '#000')};
`

const VariantRow = styled.div`
  display: flex;
  align-items: center;
  justify-content: space-between;
  width: 495px;
  margin: 11px 0 0 -1px;
`

const ButtonRow = styled.div`
  display: flex;
  gap: 25px;
  margin: 66px 0 0 158px;
`

const DialogButton = styled.button<{ $disabled?: boolean }>`
  width: 156px;
  height: 33px;
  padding: 0;
  background: ${(p) => (p.$disabled ? '#ccc' : '#e1e1e1')};
  border: 1px solid ${(p) => (p.$disabled ? '#bfbfbf' : '#adadad')};
  color: ${(p) => (p.$disabled ? '#808080' : '#1a1a1a')};
  font: 14.5px ${UI_FONT};
`

const ResizeGrip = styled.svg`
  position: absolute;
  right: 2px;
  bottom: 2px;
`

const MarkBox = styled.div`
  position: absolute;
  left: 37px;
  top: 567px;
  width: 318px;
  height: 79px;
  border: 7px solid ${MAGENTA};
`

const MarkText = styled.div`
  position: absolute;
  left: 222px;
  top: 529px;
  font-size: 23px;
  line-height: 34px;
  color: ${MAGENTA};
  white-space: nowrap;
`

const SCHEMATIC_FONT = 'Liberation Serif, serif'

const Glyph = ({ x, y, size, len, fill = YELLOW, children, anchor }: {
  x: number; y: number; size: number; len?: number; fill?: string; children: string; anchor?: 'middle'
}) => (
  <text
    x={x}
    y={y}
    fontSize={size}
    fill={fill}
    fontFamily={SCHEMATIC_FONT}
    textAnchor={anchor}
    textLength={len}
    lengthAdjust={len ? 'spacingAndGlyphs' : undefined}
  >
    {children}
  </text>
)

const Note = ({ x, y, children }: { x: number; y: number; children: string }) => (
  <text x={x} y={y} fontSize="23" fill="#ea1fe2" fontFamily='"Noto Sans CJK SC", sans-serif'>{children}</text>
)

const Frame = ({ x, y, w, h, t }: { x: number; y: number; w: number; h: number; t: number }) => (
  <rect x={x + t / 2} y={y + t / 2} width={w - t} height={h - t} fill="none" stroke={MAGENTA} strokeWidth={t} />
)

const Schematic = () => {
  const phases = [1192, 1276.5, 1360.5]
  return (
    <svg width="1447" height="851" viewBox="440 149 1447 851" style={{ background: '#000' }}>
      <defs>
        <pattern id="grid-dots" x="16" y="14" width="42" height="42" patternUnits="userSpaceOnUse">
          <rect width="1" height="1" fill="#e6e6e6" />
        </pattern>
      </defs>
      <rect x="440" y="149" width="1447" height="851" fill="url(#grid-dots)" />
      <path d="M646.5 149V1000" stroke="#fff" />

      <g stroke="#00f000">
        {phases.map((x) => <path key={x} d={`M${x + 8} 150h9`} strokeWidth="2" />)}
      </g>
      <g fill="none" stroke={YELLOW} strokeWidth="3">
        <rect x="1151" y="161" width="252" height="43" />
        <path d="M1235 161v43M1318.5 161v43" />
        {phases.map((x) => (
          <path key={x} d={`M${x} 149v24h22v19.5h-22V225`} />
        ))}
      </g>
      <Glyph x={1051} y={200} size={40} len={76}>−FR3</Glyph>
      <Glyph x={1198.5} y={233.5} size={27} len={13} fill={LIME}>2</Glyph>
      <Glyph x={1282.5} y={233.5} size={27} len={13} fill={LIME}>4</Glyph>
      <Glyph x={1366} y={233.5} size={27} len={13} fill={LIME}>6</Glyph>

      <g stroke="#ff0000" strokeWidth="3" fill="none">
        {phases.map((x) => <path key={x} d={`M${x} 225V686`} />)}
        <path d="M1444.5 149V686" />
        <path d="M1529 477H1823V603" />
      </g>

      <g fill="none" stroke="#00ffff" strokeWidth="3" strokeDasharray="32 4 3 3">
        <path d="M982 603H1697" />
        <path d="M982 939H1697" />
      </g>
      <path d="M1697 603V939" stroke="#00ffff" strokeWidth="3" strokeDasharray="32 4 3 3" fill="none" />

      <g fill="none" stroke={YELLOW} strokeWidth="3">
        <path d="M1158 456H1514M1158 498H1514" strokeDasharray="14.3 14" />
        <path d="M1143 456C1130 456 1122 457 1117 462M1108 471L1109 484M1121 495C1128 498 1135 498 1143 498" />
        <path d="M1526 463L1528 483" />
        <path d="M1192 686v22l33 26M1276.5 686v22M1360.5 686v22l-33 26" />
        <path d="M1444.5 686V772H1353" />
        <path d="M1351 755v33" strokeWidth="4.5" />
        <circle cx="1276.5" cy="771" r="63" />
        <path d="M1276 797c3-6 7-8 11-5s6 7 10 7s6-2 8-6" />
        <path d="M1823 603v30M1786.5 673a37.5 40 0 0 1 75 0" />
        <path d="M1801 650h44M1811 661h24M1815 671h17" />
      </g>
      <Glyph x={1198} y={698} size={27} len={26} fill={LIME}>U1</Glyph>
      <Glyph x={1284} y={698} size={27} len={25} fill={LIME}>V1</Glyph>
      <Glyph x={1367} y={698} size={27} len={27} fill={LIME}>W1</Glyph>
      <Glyph x={1451} y={698} size={27} len={27} fill={LIME}>PE</Glyph>
      <Glyph x={1265} y={767} size={46} len={24}>M</Glyph>
      <Glyph x={1246} y={812} size={46} len={17}>3</Glyph>
      <Glyph x={1092} y={788} size={42} len={56}>−M3</Glyph>
      <Glyph x={1702} y={662} size={42} len={58}>−A2</Glyph>
      <Glyph x={1832} y={614} size={28} len={9} fill={LIME}>1</Glyph>

      <ellipse cx="1530.5" cy="476" rx="18" ry="25.5" fill="none" stroke="#ea1fe2" strokeWidth="3" />
      <Frame x={1059} y={351} w={525} h={334} t={7} />
      <Frame x={1680} y={571} w={197} h={181} t={7} />
      <Note x={1100} y={410}>这是屏蔽线</Note>
      <Note x={1518} y={432}>这个点是屏蔽线接地线的点</Note>
      <Note x={1702} y={721}>屏蔽接地的符号</Note>
    </svg>
  )
}

const Line = ({ d, w }: { d: string; w: number }) => <path d={d} fill="none" stroke={YELLOW} strokeWidth={w} strokeLinecap="round" />

const symbols: React.ReactNode[] = [
  <>
    <Line d="M81.7 50V109M22 110H142M36 138.6H128M50 166.4H114" w={6.5} />
    <Glyph x={116} y={79} size={78} anchor="middle" fill={LIME}>1</Glyph>
  </>,
  <>
    <Line d="M81.7 36V127M13 166A69 69 0 0 1 151 166M41 127H123M50 145.4H114M60 165.4H104" w={4.5} />
    <Glyph x={107} y={57.5} size={53} anchor="middle" fill={LIME}>1</Glyph>
  </>,
  <>
    <circle cx="81.3" cy="114" r="52" fill="none" stroke={YELLOW} strokeWidth="4" />
    <Line d="M81 29V114M50 114H112M57 129H105M65 144H97" w={4} />
    <Glyph x={100} y={44.5} size={41} anchor="middle" fill={LIME}>1</Glyph>
  </>,
  <>
    <circle cx="81.3" cy="114" r="26" fill="none" stroke={YELLOW} strokeWidth="5.5" />
    <Line d="M81.3 41V87.5M35 88H128.7L81.7 168.6Z" w={5.5} />
    <Glyph x={108} y={65} size={63} anchor="middle" fill={LIME}>1</Glyph>
  </>,
  <>
    <rect x="30" y="5" width="92" height="14" rx="3" fill={YELLOW} />
    <Line d="M76 18V96" w={6.5} />
    <Glyph x={113} y={147} size={78} anchor="middle" fill={LIME}>1</Glyph>
  </>,
  <>
    <path d="M104 34V147H33M33 126V170" fill="none" stroke={YELLOW} strokeWidth="3.7" />
    <Glyph x={121} y={44} size={41} anchor="middle" fill={LIME}>1</Glyph>
  </>,
  <>
    <path d="M79 47V81M54 108A25.5 27 0 0 1 105 108M79 143V164" fill="none" stroke={YELLOW} strokeWidth="3.5" />
    <rect x="65" y="106" width="29" height="37" rx="2" fill={YELLOW} />
    <rect x="53" y="162" width="54" height="7" rx="2" fill={YELLOW} />
    <Glyph x={102} y={51} size={45} anchor="middle" fill={LIME}>1</Glyph>
  </>,
  <>
    <path d="M66 28V147M43 87.5H90M59 70H74L66 87Z" fill="none" stroke={YELLOW} strokeWidth="3.5" />
    <Glyph x={85} y={45} size={40} anchor="middle" fill={LIME}>1</Glyph>
    <Glyph x={101} y={87.5} size={40} len={19}>R</Glyph>
    <Glyph x={102} y={119} size={40} len={17}>S</Glyph>
    <Glyph x={85} y={158} size={40} anchor="middle" fill={LIME}>2</Glyph>
  </>,
]

const libraryIcon = (
  <>
    <rect x="2.5" y="6.5" width="15" height="12" fill="#fff" stroke="#666" />
    <path d="M5 4.5h10v4H5z" fill="#eee" stroke="#888" />
    <path d="M6 2h3v3H6z" fill="#7b9b7a" />
    <path d="M11 2h3v3h-3z" fill="#dd9a33" />
    <path d="M5 11.5h10v3H5z" fill="#dbe5f1" stroke="#3a72b8" strokeWidth=".7" />
  </>
)

const symbolsIcon = (boxed: boolean) => (
  <>
    {boxed && <rect x="1.5" y="1.5" width="18" height="17" fill="#fff" stroke="#777" />}
    <rect x="4" y="3.5" width="5.5" height="5.5" fill="#3a72b8" />
    <circle cx="14" cy="7" r="3" fill="#3aa57a" />
    <path d="M3.5 16.5l4-6l4 6z" fill="#e0922a" />
  </>
)

const folderIcon = (
  <>
    <path d="M1 3h7l1 2H1z" fill="#8a8a8a" />
    <rect x="1" y="5" width="19" height="14" fill="#e9b56a" />
    <rect x="1" y="5" width="19" height="1" fill="#fff" />
  </>
)

type TreeItem = { label: string; x: number; icon: React.ReactNode; open?: boolean; selected?: boolean }

const level1 = (label: string, open = false): TreeItem => ({ label, x: 45, icon: libraryIcon, open })

const treeItems: TreeItem[] = [
  level1('PLC/总线'),
  level1('电缆 / 天线'),
  level1('安全设备'),
  level1('传感器,开关和按钮'),
  level1('电压源和发电机'),
  level1('变频器,变压器和整流器'),
  level1('信号设备,发光和发声'),
  level1('耗电设备(电机,加热器,灯)'),
  level1('阀,闸和耦合器'),
  level1('电子和逻辑组件'),
  level1('电气工程的特殊功能', true),
  { label: '其它', x: 65, icon: symbolsIcon(true) },
  { label: '设备连接点', x: 65, icon: symbolsIcon(true), selected: true },
  { label: '特殊符号', x: 25, icon: symbolsIcon(false) },
  { label: 'IEC_single_symbol', x: 5, icon: folderIcon },
  { label: 'GRAPHICS', x: 5, icon: folderIcon },
]

const menuItems = ['项目 (P)', '页 (A)', '布局空间 (L)', '编辑 (E)', '视图 (V)', '插入 (I)', '项目数据 (R)', '查找 (F)', '选项 (O)', '工具 (U)', '窗口 (W)', '帮助 (H)']

const rowOne = [
  'newPage openPage closePage print | wrench | cut copy paste | selectx | brushA brushB | undoDot undo redo redoDot | layout layoutGray checkGray tableGray',
  'refresh zoomWin zoomIn zoomOut zoom100 | back forward | hashA hashB *hashC hashD hashE | *grid *gridDot snap *magnet *magnetAxis *snapPart num128 *rectDots | lineWave lineSignal lineCross',
  'chip chipLinks | cart textT',
  'listGreen listOut listPlain listPlain listBlob listSword | listDark | *listRail | listCut listWires listWave listDrop listArrow | listBlueT listPlan listBlackT | listWarn listChip | listCheck listDown | listEdit listEditG',
]

const rowTwo = [
  { grip: 10, items: 'cartBlue cartGreen | puzzle | term123 term12a term12b | barsRefresh | flagCheck flagGear flagArrow | flagBook flagIn | flagX' },
  { grip: 11, items: '*docActive pageNew pageOpen pageClose pageIn pageOut' },
  { grip: 11, items: 'dashAdd | gridNode | dashRings dashRing dashRingRed | dashBanks termA termB termC termD boxDown boxUp greenTerm | lampLink lampRed | pageCorner hatched dashBurst' },
  { grip: 11, items: 'stamp | triBars lineRing lineCut | kBlue ringBar | kGreen | rainbow' },
]

const rightTop = 'hookA hookB hookC hookD | forkA forkB forkC forkD | tripleA tripleB | pointer diag'
const rightBottom = 'line polyline polygon square squareLink | circle circlePts arcPts arc sector ellipse | spline | bigT picture chain | measure1 measureDiag measure3 measure4 measureStack angle radius'

const Icon = ({ name }: { name: string }) => (
  <svg width="20" height="20" viewBox="0 0 20 20">{icons[name]}</svg>
)

const Toolbar = ({ items, grip = 10 }: { items: string; grip?: number }) => (
  <ToolGroup>
    <Grip $w={grip} />
    {items.split(' ').map((item, i) => {
      if (item === '|') return <ToolSep key={i} />
      const active = item.startsWith('*')
      return (
        <ToolButton key={i} $active={active}>
          <Icon name={active ? item.slice(1) : item} />
        </ToolButton>
      )
    })}
  </ToolGroup>
)

const VerticalTools = ({ items }: { items: string }) => (
  <>
    <RightGrip />
    {items.split(' ').map((item, i) => (item === '|' ? <RightSep key={i} /> : (
      <RightTool key={i}><Icon name={item} /></RightTool>
    )))}
  </>
)

const ExpandBox = ({ open }: { open?: boolean }) => (
  <Expander width="13" height="13" viewBox="0 0 13 13">
    <rect x=".5" y=".5" width="12" height="12" fill="#f4f4f4" stroke="#a4a4a4" />
    <path d={open ? 'M3 6.5h7' : 'M3 6.5h7M6.5 3v7'} stroke="#34527f" />
  </Expander>
)

const Chevron = ({ dir }: { dir: 'up' | 'down' | 'left' | 'right' }) => {
  const d = { up: 'M1 7l5-5l5 5', down: 'M1 2l5 5l5-5', left: 'M7 1l-5 5l5 5', right: 'M2 1l5 5l-5 5' }[dir]
  return <svg width="12" height="12" viewBox="0 0 12 12"><path d={d} fill="none" stroke="#555" strokeWidth="2" /></svg>
}

const ComboArrow = () => (
  <svg width="12" height="8" viewBox="0 0 12 8"><path d="M1 1l5 5l5-5" fill="none" stroke="#555" /></svg>
)

const Pin = () => (
  <svg width="12" height="14" viewBox="0 0 12 14"><path d="M4 1h4v6h2v1.5H2V7h2zM5.5 8.5h1V13h-1z" fill="#222" /></svg>
)

const DockHead = ({ title }: { title: string }) => (
  <DockHeader>
    <DockTitle>{title}</DockTitle>
    <Caret />
    <Pin />
    <RedClose $size={14} $ml={7}>x</RedClose>
  </DockHeader>
)

export default function App() {
  return (
    <Window>
      <GlobalStyle />
      <TitleBar>
        <svg width="21" height="21" viewBox="0 0 21 21">
          <rect width="21" height="21" rx="2.5" fill="#d9262b" />
          <path d="M10.5 2.5L19 18H2z" fill="none" stroke="#fff" strokeWidth="1.5" />
          <path d="M11.5 6l-3 6h2.5l-1.5 5l4-7h-2.5z" fill="#fff" />
        </svg>
        <TitleText>EPLAN Electric P8 2.9 SP1 - D:\PLC_File\eplanProgram\learnEplan - =work1+Power/3 (learnEplan)</TitleText>
        <WindowControls>
          <svg width="13" height="14" viewBox="0 0 13 14"><path d="M0 7h13" stroke="#999" /></svg>
          <svg width="13" height="14" viewBox="0 0 13 14"><path d="M.5 3.5h9v10h-9zM3 3.5V.5h9.5v10H9.5" fill="none" stroke="#999" /></svg>
          <svg width="13" height="14" viewBox="0 0 13 14"><path d="M.5 1l12 12M12.5 1L.5 13" stroke="#999" /></svg>
        </WindowControls>
      </TitleBar>
      <OtherWindowShadow />

      <MenuBar>
        <Grip $w={10} $mr={7} />
        {menuItems.map((item) => <MenuItem key={item}>{item}</MenuItem>)}
      </MenuBar>

      <ToolRow>
        {rowOne.map((items, i) => <Toolbar key={i} items={items} />)}
      </ToolRow>
      <ToolRow>
        {rowTwo.map((bar, i) => <Toolbar key={i} items={bar.items} grip={bar.grip} />)}
      </ToolRow>

      <Workspace>
        <Dock $w={190} $mr={4}>
          <DockHead title="页 - 智控eplan" />
          <DockFilter>筛选器: (<u>F</u>)</DockFilter>
          <DockSelectRow>
            <DockSelect $w={139}>- 未激活 -</DockSelect>
            <DockSelect $w={31} />
          </DockSelectRow>
          <DockSpacer />
          <Preview />
        </Dock>
        <Dock $w={237} $mr={5}>
          <DockHead title="电缆 - learnEplan" />
          <DockFilter>筛选器: (<u>F</u>)</DockFilter>
          <DockSelectRow>
            <DockSelect $w={185}>- 未激活 -</DockSelect>
            <DockSelect $w={32} />
          </DockSelectRow>
          <DockSpacer />
          <HScroll>
            <Chevron dir="left" />
            <HThumb />
            <Chevron dir="right" />
          </HScroll>
          <DockTabs>
            <DockTab $on>树</DockTab>
            <DockTab>列表</DockTab>
            <DockTabRest />
          </DockTabs>
        </Dock>

        <DocArea>
          <TabStrip>
            <DocTab>
              =work1+Power/3 (learnEplan)
              <RedClose $size={21} $ml={5}>x</RedClose>
            </DocTab>
            <StripCaret />
          </TabStrip>
          <CanvasFrame>
            <Schematic />
          </CanvasFrame>
        </DocArea>

        <RightBar>
          <RightBlock $h={315}>
            <VerticalTools items={rightTop} />
          </RightBlock>
          <RightBlock $h={573}>
            <VerticalTools items={rightBottom} />
          </RightBlock>
        </RightBar>
      </Workspace>

      <StatusBar>
        <StatusCell>设备连接点</StatusCell>
        <StatusCell $w={218}>打开: 4.00 mm</StatusCell>
        <StatusCell $w={127}>逻辑 1:1</StatusCell>
        <StatusCell $w={141}>#</StatusCell>
      </StatusBar>
      <DownloadMark width="22" height="18" viewBox="0 0 22 18">
        <path d="M8 0h6v6h4l-7 7l-7-7h4z" fill="#2fa36f" />
        <path d="M1 15h20v3H1z" fill="#4caf83" />
      </DownloadMark>
      <Watermark>CSDN @花崎泪</Watermark>

      <Dialog>
        <DialogTitle>
          符号选择
          <svg width="13" height="13" viewBox="0 0 13 13"><path d="M.5.5l12 12M12.5.5l-12 12" stroke="#222" /></svg>
        </DialogTitle>
        <DialogBody>
          <LeftPane>
            <TabPage>
              <FieldLabel>筛选器: (F)</FieldLabel>
              <FilterRow>
                <ComboBox $w={361}>
                  - 未激活 -
                  <ComboArrow />
                </ComboBox>
                <DotsButton>...</DotsButton>
              </FilterRow>
              <Tree>
                <TreeRows>
                  <TreeGuide $x={11} $top={0} $h={346} />
                  <TreeGuide $x={31} $top={0} $h={287} />
                  <TreeGuide $x={71} $top={253} $h={34} />
                  {treeItems.map((item) => (
                    <TreeRow key={item.label} $x={item.x}>
                      <ExpandBox open={item.open} />
                      <svg width="20" height="20" viewBox="0 0 20 20">{item.icon}</svg>
                      <RowLabel $selected={item.selected}>{item.label}</RowLabel>
                    </TreeRow>
                  ))}
                </TreeRows>
                <VScroll>
                  <ScrollArrow><Chevron dir="up" /></ScrollArrow>
                  <VThumb />
                  <ScrollEnd><Chevron dir="down" /></ScrollEnd>
                </VScroll>
              </Tree>
              <InfoBox>8 个符号</InfoBox>
            </TabPage>
            <BookTabs>
              <BookTab $on>树</BookTab>
              <BookTab>列表</BookTab>
            </BookTabs>
          </LeftPane>
          <Splitter />
          <RightPane>
            <SymbolGrid>
              {symbols.map((symbol, i) => (
                <SymbolCell key={i}>
                  <svg width="162" height="174" viewBox="0 0 162 174">{symbol}</svg>
                </SymbolCell>
              ))}
              <SymbolCell $empty />
            </SymbolGrid>
            <VariantRow>
              变量: (V)
              <ComboBox $w={384} $bg="#e8e8e8">
                默认变量
                <ComboArrow />
              </ComboBox>
            </VariantRow>
            <ButtonRow>
              <DialogButton $disabled>确定</DialogButton>
              <DialogButton>取消</DialogButton>
            </ButtonRow>
          </RightPane>
        </DialogBody>
        <ResizeGrip width="12" height="12" viewBox="0 0 12 12">
          <path d="M10 2h1v1h-1zM7 5h1v1H7zM10 5h1v1h-1zM4 8h1v1H4zM7 8h1v1H7zM10 8h1v1h-1z" fill="#aaa" />
        </ResizeGrip>
      </Dialog>

      <MarkBox />
      <MarkText>屏蔽接地的插入寻找位置</MarkText>
    </Window>
  )
}
